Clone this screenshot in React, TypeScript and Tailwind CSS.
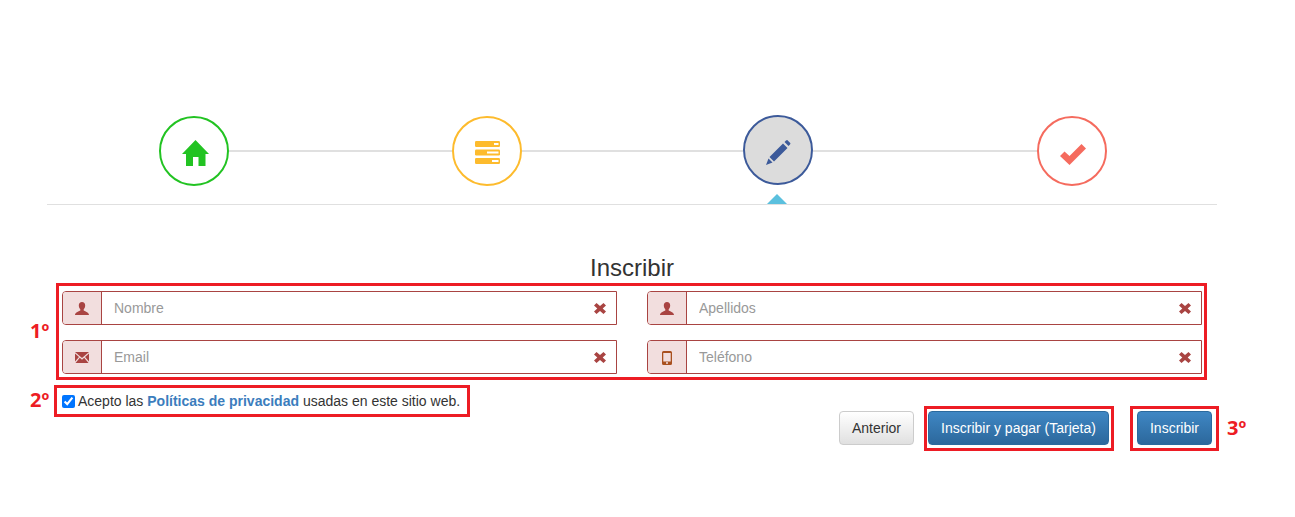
import React from "react";

const Home = () => (
  <svg width="27" height="26" viewBox="0 0 27 26" className="fill-[#22c322] ml-[3px] mt-[4px]">
    <path d="M13.500 0L27 14h-3.500v12h-7v-9h-5.500v9h-7V14H0z" />
  </svg>
);
const Tasks = () => (
  <svg width="25" height="23" viewBox="0 0 25 23" className="mt-[3px]">
    <rect x="0" y="0" width="25" height="6" rx="1.200" fill="#fdbb2d" />
    <rect x="19" y="2" width="4.500" height="2" fill="#fff" />
    <rect x="0" y="8.500" width="25" height="6" rx="1.200" fill="#fdbb2d" />
    <rect x="12" y="10.500" width="11.500" height="2" fill="#fff" />
    <rect x="0" y="17" width="25" height="6" rx="1.200" fill="#fdbb2d" />
    <rect x="17" y="19" width="6.500" height="2" fill="#fff" />
  </svg>
);
const Pencil = () => (
  <svg width="25" height="25" viewBox="0 0 25 25" className="fill-[#3c5a9a] mt-[5px] ml-[1px]">
    <path d="M20 0.500l1.200-.5 3.300 3.300-.5 1.300-1.500 1.500L18.500 2zM17 3.500l4.500 4.500L8 21.500 3.500 17zM2.500 18.500l4 4L0 25z" />
  </svg>
);
const Check = () => (
  <svg width="26" height="21" viewBox="0 0 26 21" className="fill-[#f56b5e] mt-[7px] ml-[2px]">
    <path d="M21.500 0L26 4.500 9.500 21 0 12l4.500-4.500 5 4.500z" />
  </svg>
);
const User = () => (
  <svg width="14" height="13" viewBox="0 0 14 13" className="fill-[#a94442] mt-[1px]">
    <path d="M7 0c2 0 3.200 1.500 3.200 3.500 0 1.500-.7 3-1.500 3.700v1.300C9.500 9.300 14 10 14 13H0c0-3 4.500-3.700 5.300-4.500V7.200C4.500 6.500 3.800 5 3.800 3.500 3.800 1.500 5 0 7 0z" />
  </svg>
);
const Mail = () => (
  <svg width="14" height="11" viewBox="0 0 14 11" className="fill-[#a94442] mt-[1px]">
    <path d="M0 0h14L7 6zM0 1.500l4 3.500-4 4.500zM14 1.500L10 5l4 4.500zM4.800 5.800L7 7.700l2.200-1.900 4.300 5.200H.5z" />
  </svg>
);
const Phone = () => (
  <svg width="10" height="14" viewBox="0 0 10 14" className="fill-[#a9501f] mt-[1px]">
    <path fillRule="evenodd" d="M1.500 0h7A1.500 1.500 0 0 1 10 1.500v11A1.500 1.500 0 0 1 8.500 14h-7A1.500 1.500 0 0 1 0 12.500v-11A1.500 1.500 0 0 1 1.500 0zM1.300 2v8.500h7.400V2zM4 11.300v1.400h2v-1.400z" />
  </svg>
);
const Remove = () => (
  <svg width="12" height="11" viewBox="0 0 12 11" className="fill-[#a94442]">
    <path d="M2.500 0L6 3 9.500 0 12 2.500 8.700 5.500 12 8.500 9.500 11 6 8 2.500 11 0 8.500l3.300-3L0 2.500z" />
  </svg>
);

function Step({ color, active, children }: { color: string; active?: boolean; children: React.ReactNode }) {
  return (
    <div
      className={
        "w-[70px] h-[70px] shrink-0 rounded-full border-2 flex items-center justify-center " +
        (active ? "bg-[#dcdcdc] -mt-px" : "bg-white")
      }
      style={{ borderColor: color }}
    >
      {children}
    </div>
  );
}

function Line({ w }: { w: string }) {
  return <div className={"h-[2px] bg-[#e0e0e0] " + w} />;
}

function Field({ icon, placeholder }: { icon: React.ReactNode; placeholder: string }) {
  return (
    <div className="flex h-[34px] w-[555px] border border-[#a94442] rounded-l-[4px] bg-white">
      <div className="w-[39px] shrink-0 flex items-center justify-center bg-[#f2dede] border-r border-[#a94442] rounded-l-[3px]">
        {icon}
      </div>
      <input
        readOnly
        placeholder={placeholder}
        className="flex-1 min-w-0 pl-3 text-[14px] text-[#555] placeholder:text-[#999] outline-none bg-transparent"
      />
      <div className="w-[34px] shrink-0 flex items-center justify-center pl-[1px]">
        <Remove />
      </div>
    </div>
  );
}

function Mark({ className }: { className: string }) {
  return <div className={"absolute border-[3.5px] border-[#ed1c24] pointer-events-none " + className} />;
}

function Num({ className, children }: { className: string; children: React.ReactNode }) {
  return (
    <div className={"absolute text-[#ed1c24] font-bold text-[20px] leading-none font-['Open_Sans',sans-serif] " + className}>
      {children}
    </div>
  );
}

export default function App() {
  return (
    <div className="relative w-[1295px] h-[517px] overflow-hidden bg-white font-['Liberation_Sans',Arial,sans-serif] text-[#333]">
      <div className="ml-[47px] w-[1170px] pt-[116px]">
        <div className="relative h-[89px] border-b border-[#e0e0e0]">
          <div className="flex items-start pl-[112px]">
            <Step color="#22c322"><Home /></Step>
            <div className="pt-[34px]"><Line w="w-[223px]" /></div>
            <Step color="#fdbb2d"><Tasks /></Step>
            <div className="pt-[34px]"><Line w="w-[221px]" /></div>
            <Step color="#3c5a9a" active><Pencil /></Step>
            <div className="pt-[34px]"><Line w="w-[224px]" /></div>
            <Step color="#f56b5e"><Check /></Step>
          </div>
          <div className="absolute left-[720px] bottom-0 w-0 h-0 border-x-[10px] border-x-transparent border-b-[10px] border-b-[#5bc0de]" />
        </div>

        <h2 className="mt-[50px] text-center text-[24px] leading-[26px] font-normal text-[#333]">Inscribir</h2>

        <div className="mt-[10px] px-[15px] flex flex-col gap-[15px]">
          <div className="flex justify-between">
            <Field icon={<User />} placeholder="Nombre" />
            <Field icon={<User />} placeholder="Apellidos" />
          </div>
          <div className="flex justify-between">
            <Field icon={<Mail />} placeholder="Email" />
            <Field icon={<Phone />} placeholder="Teléfono" />
          </div>
        </div>

        <label className="mt-[17px] ml-[15px] flex items-center text-[14px] leading-[20px]">
          <input type="checkbox" defaultChecked readOnly className="m-0 w-[13px] h-[13px] mr-[3px]" />
          <span>
            Acepto las <a className="font-bold text-[#3b7dbd]">Políticas de privacidad</a> usadas en este sitio web.
          </span>
        </label>

        <div className="flex justify-end pr-[5px] text-[14px]">
          <button className="w-[75px] h-[34px] rounded-[4px] border border-[#ccc] bg-gradient-to-b from-white to-[#e0e0e0] text-[#333]">
            Anterior
          </button>
          <button className="ml-[14px] w-[181px] h-[34px] rounded-[4px] border border-[#2b6a9e] bg-gradient-to-b from-[#3f87c4] to-[#2c689c] text-white">
            Inscribir y pagar (Tarjeta)
          </button>
          <button className="ml-[28px] w-[75px] h-[34px] rounded-[4px] border border-[#2b6a9e] bg-gradient-to-b from-[#3f87c4] to-[#2c689c] text-white">
            Inscribir
          </button>
        </div>
      </div>

      <Mark className="left-[56px] top-[283px] w-[1151px] h-[97px]" />
      <Mark className="left-[54px] top-[385px] w-[416px] h-[32px]" />
      <Mark className="left-[924px] top-[406px] w-[190px] h-[45px]" />
      <Mark className="left-[1130px] top-[406px] w-[89px] h-[45px]" />
      <Num className="left-[30px] top-[321px]">1º</Num>
      <Num className="left-[30px] top-[390px]">2º</Num>
      <Num className="left-[1227px] top-[418px]">3º</Num>
    </div>
  );
}
